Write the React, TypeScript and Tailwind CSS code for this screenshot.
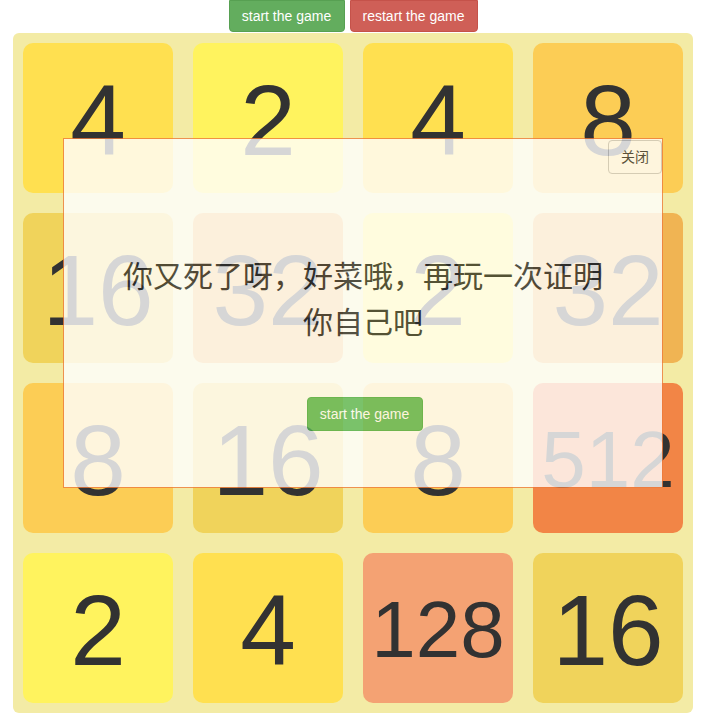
import React from "react";

type Tile = {
  id: string;
  value: number;
};

const TILE_STYLES: Record<number, string> = {
  2: "bg-[#fff35e]",
  4: "bg-[#ffe050]",
  8: "bg-[#fccd55]",
  16: "bg-[#f0d35b]",
  32: "bg-[#f0b453]",
  128: "bg-[#f4a273]",
  512: "bg-[#f28546]",
};

const BOARD: number[] = [4, 2, 4, 8, 16, 32, 2, 32, 8, 16, 8, 512, 2, 4, 128, 16];

const App = () => {
  const tiles: Tile[] = BOARD.map((value, i) => ({ id: String(i), value }));

  return (
    <div className="w-[713px] h-[713px] overflow-hidden bg-white font-['Liberation_Sans','Noto_Sans_CJK_SC',sans-serif]">
      <div className="ml-[13px] w-[680px]">
        {/* top buttons */}
        <div className="flex justify-center gap-[5px] h-[33px]">
          <button className="h-[32px] w-[116px] rounded-b-[4px] bg-[#63ad5e] border border-[#57a052] text-[14px] text-white">
            start the game
          </button>
          <button className="h-[32px] w-[128px] rounded-b-[4px] bg-[#cf5f57] border border-[#c5524a] text-[14px] text-white">
            restart the game
          </button>
        </div>

        {/* board */}
        <div className="relative grid grid-cols-4 gap-[20px] p-[10px] rounded-md bg-[#f3eba5]">
          {tiles.map((tile) => (
            <div
              key={tile.id}
              className={`flex h-[150px] items-center justify-center rounded-[10px] pt-[3px] leading-[150px] text-[#323232] ${TILE_STYLES[tile.value]} ${
                tile.value >= 100 ? "text-[80px]" : "text-[100px]"
              }`}
            >
              {tile.value}
            </div>
          ))}

          {/* game over dialog */}
          <div className="absolute left-[50px] top-[105px] flex h-[350px] w-[600px] flex-col items-center border border-[#ee7b3c] bg-white opacity-80">
            <button className="absolute right-0 top-px h-[34px] px-3 rounded-[4px] border border-[#cccccc] bg-white text-[14px] text-[#333]">
              关闭
            </button>
            <p className="mt-[115px] w-[496px] text-center text-[30px] leading-[46px] text-[#2a2a2a]">
              你又死了呀，好菜哦，再玩一次证明你自己吧
            </p>
            <button className="ml-[3px] mt-[51px] h-[34px] w-[116px] rounded-[4px] border border-[#4cae4c] bg-[#5cb85c] text-[14px] text-white">
              start the game
            </button>
          </div>
        </div>
      </div>
    </div>
  );
};

export default App;
